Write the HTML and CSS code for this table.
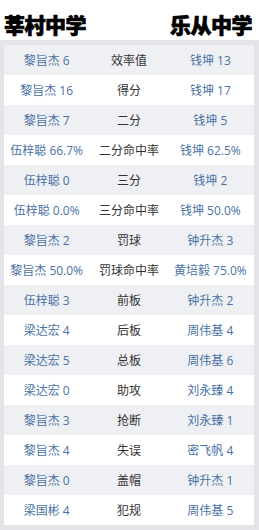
FILE: index.html
```html
<!DOCTYPE html>
<html lang="zh">
<head>
<meta charset="utf-8">
<link rel="stylesheet" href="styles.css">
</head>
<body>
<div class="header">
  <span class="team">莘村中学</span>
  <span class="team">乐从中学</span>
</div>
<div class="table">
  <div class="row"><span class="a">黎旨杰 6</span><span class="c">效率值</span><span class="b">钱坤 13</span></div>
  <div class="row"><span class="a">黎旨杰 16</span><span class="c">得分</span><span class="b">钱坤 17</span></div>
  <div class="row"><span class="a">黎旨杰 7</span><span class="c">二分</span><span class="b">钱坤 5</span></div>
  <div class="row"><span class="a">伍梓聪 66.7%</span><span class="c">二分命中率</span><span class="b">钱坤 62.5%</span></div>
  <div class="row"><span class="a">伍梓聪 0</span><span class="c">三分</span><span class="b">钱坤 2</span></div>
  <div class="row"><span class="a">伍梓聪 0.0%</span><span class="c">三分命中率</span><span class="b">钱坤 50.0%</span></div>
  <div class="row"><span class="a">黎旨杰 2</span><span class="c">罚球</span><span class="b">钟升杰 3</span></div>
  <div class="row"><span class="a">黎旨杰 50.0%</span><span class="c">罚球命中率</span><span class="b">黄培毅 75.0%</span></div>
  <div class="row"><span class="a">伍梓聪 3</span><span class="c">前板</span><span class="b">钟升杰 2</span></div>
  <div class="row"><span class="a">梁达宏 4</span><span class="c">后板</span><span class="b">周伟基 4</span></div>
  <div class="row"><span class="a">梁达宏 5</span><span class="c">总板</span><span class="b">周伟基 6</span></div>
  <div class="row"><span class="a">梁达宏 0</span><span class="c">助攻</span><span class="b">刘永臻 4</span></div>
  <div class="row"><span class="a">黎旨杰 3</span><span class="c">抢断</span><span class="b">刘永臻 1</span></div>
  <div class="row"><span class="a">黎旨杰 4</span><span class="c">失误</span><span class="b">密飞帆 4</span></div>
  <div class="row"><span class="a">黎旨杰 0</span><span class="c">盖帽</span><span class="b">钟升杰 1</span></div>
  <div class="row"><span class="a">梁国彬 4</span><span class="c">犯规</span><span class="b">周伟基 5</span></div>
</div>
</body>
</html>
```
FILE: styles.css
```css
html, body {
  margin: 0;
  padding: 0;
}
body {
  background: #e2e4e7;
  width: 259px;
  height: 530px;
  overflow: hidden;
  font-family: "Open Sans", "Noto Sans CJK SC", sans-serif;
}
.header {
  background: #ffffff;
  height: 40px;
  box-sizing: border-box;
  padding: 12px 7px 0 4px;
  display: flex;
  justify-content: space-between;
  align-items: flex-start;
}
.team {
  font-family: "Noto Sans CJK SC", sans-serif;
  font-size: 21px;
  line-height: 24px;
  font-weight: 900;
  color: #000;
  letter-spacing: -0.5px;
  -webkit-text-stroke: 0.7px #000;
}
.table {
  margin: 5px 5px 0 4px;
  display: flex;
  flex-direction: column;
}
.row {
  height: 30px;
  display: grid;
  grid-template-columns: 1fr 1fr 1fr;
  align-items: center;
  text-align: center;
  font-size: 12px;
  background: #ffffff;
}
.row:nth-child(odd) {
  background: #eef0f3;
}
.a, .b {
  color: #4a72a4;
}
.c {
  color: #333333;
}
.a {
  margin-right: -2px;
}
.b {
  margin-left: -4px;
}
```
